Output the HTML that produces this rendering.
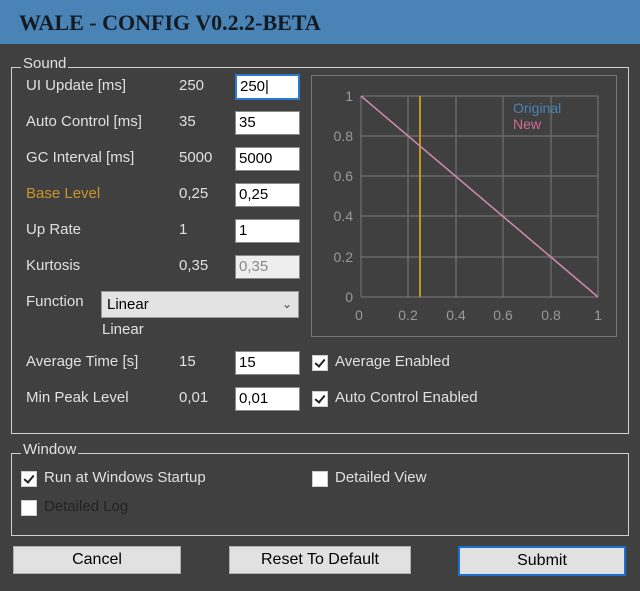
<!DOCTYPE html><html><head><style>
body{margin:0;width:640px;height:591px;background:#404040;font-family:"Liberation Sans",sans-serif;font-size:15px;color:#e0e0e0;position:relative;overflow:hidden}
.a{position:absolute;white-space:nowrap}
.title{left:0;top:0;width:640px;height:44px;background:#4a84b6}
.title span{position:absolute;left:19px;top:10px;font-family:"Liberation Serif",serif;font-weight:bold;font-size:22px;color:#141a22;letter-spacing:0px}
.grp{position:absolute;border:1px solid #d0d0d0}
.lg{position:absolute;background:#404040;padding:0 2px;font-size:15px;color:#e0e0e0}
.in{position:absolute;width:60px;height:22px;background:#fff;border:1px solid #888;color:#000;padding-left:3px;line-height:22px;box-sizing:content-box}
.cb{position:absolute;width:14px;height:14px;background:#fff;border:1px solid #ccc}
.cb.c::after{content:"";position:absolute;left:4px;top:1px;width:4px;height:8px;border:solid #222;border-width:0 2px 2px 0;transform:rotate(40deg)}
.btn{position:absolute;height:26px;background:#e1e1e1;border:1px solid #adadad;color:#000;text-align:center;line-height:26px;font-size:16px}
</style></head><body>
<div class="a title"><span>WALE - CONFIG V0.2.2-BETA</span></div>
<div class="grp" style="left:11px;top:67px;width:616px;height:365px"></div>
<div class="lg" style="left:21px;top:55px">Sound</div>
<div class="a" style="left:26px;top:77px">UI Update [ms]</div><div class="a" style="left:179px;top:77px">250</div><div class="in" style="left:235px;top:74px;border:2px solid #2a7ad0;width:58px;height:22px">250|</div>
<div class="a" style="left:26px;top:113px">Auto Control [ms]</div><div class="a" style="left:179px;top:113px">35</div><div class="in" style="left:235px;top:111px">35</div>
<div class="a" style="left:26px;top:149px">GC Interval [ms]</div><div class="a" style="left:179px;top:149px">5000</div><div class="in" style="left:235px;top:147px">5000</div>
<div class="a" style="left:26px;top:185px;color:#c89628">Base Level</div><div class="a" style="left:179px;top:185px">0,25</div><div class="in" style="left:235px;top:183px">0,25</div>
<div class="a" style="left:26px;top:221px">Up Rate</div><div class="a" style="left:179px;top:221px">1</div><div class="in" style="left:235px;top:219px">1</div>
<div class="a" style="left:26px;top:257px">Kurtosis</div><div class="a" style="left:179px;top:257px">0,35</div><div class="in" style="left:235px;top:255px;background:#eee;color:#888">0,35</div>
<div class="a" style="left:26px;top:293px">Function</div>
<div class="a" style="left:101px;top:291px;width:196px;height:25px;background:#e3e3e3;border:1px solid #999;color:#000;line-height:25px"><span style="padding-left:5px">Linear</span><span style="position:absolute;right:6px;top:0;font-size:12px;color:#444">&#8964;</span></div>
<div class="a" style="left:102px;top:321px">Linear</div>
<div class="a" style="left:26px;top:353px">Average Time [s]</div><div class="a" style="left:179px;top:353px">15</div><div class="in" style="left:235px;top:351px">15</div>
<div class="a" style="left:26px;top:389px">Min Peak Level</div><div class="a" style="left:179px;top:389px">0,01</div><div class="in" style="left:235px;top:387px">0,01</div>
<div class="cb c" style="left:312px;top:355px"></div><div class="a" style="left:335px;top:353px">Average Enabled</div>
<div class="cb c" style="left:312px;top:391px"></div><div class="a" style="left:335px;top:389px">Auto Control Enabled</div>
<svg class="a" style="left:311px;top:75px" width="307" height="263" font-family="Liberation Sans" font-size="14" fill="#999">
<rect x="0.5" y="0.5" width="305" height="261" fill="none" stroke="#777"/>
<g stroke="#7a7a7a"><line x1="50" y1="21" x2="50" y2="222"/><line x1="97" y1="21" x2="97" y2="222"/><line x1="145" y1="21" x2="145" y2="222"/><line x1="192" y1="21" x2="192" y2="222"/><line x1="240" y1="21" x2="240" y2="222"/><line x1="287" y1="21" x2="287" y2="222"/>
<line x1="50" y1="21" x2="287" y2="21"/><line x1="50" y1="61" x2="287" y2="61"/><line x1="50" y1="101" x2="287" y2="101"/><line x1="50" y1="141" x2="287" y2="141"/><line x1="50" y1="182" x2="287" y2="182"/><line x1="50" y1="222" x2="287" y2="222"/></g>
<line x1="109" y1="21" x2="109" y2="222" stroke="#c0961e" stroke-width="2"/>
<line x1="50" y1="21" x2="287" y2="222" stroke="#d08ab0" stroke-width="1.5"/>
<text x="202" y="38" fill="#4a84b6">Original</text><text x="202" y="54" fill="#d06c90">New</text>
<g text-anchor="end"><text x="42" y="26">1</text><text x="42" y="66">0.8</text><text x="42" y="106">0.6</text><text x="42" y="146">0.4</text><text x="42" y="187">0.2</text><text x="42" y="227">0</text></g>
<g text-anchor="middle"><text x="48" y="245">0</text><text x="97" y="245">0.2</text><text x="145" y="245">0.4</text><text x="192" y="245">0.6</text><text x="240" y="245">0.8</text><text x="287" y="245">1</text></g>
</svg>
<div class="grp" style="left:11px;top:453px;width:616px;height:81px"></div>
<div class="lg" style="left:21px;top:441px">Window</div>
<div class="cb c" style="left:21px;top:471px"></div><div class="a" style="left:44px;top:469px">Run at Windows Startup</div>
<div class="cb" style="left:312px;top:471px"></div><div class="a" style="left:335px;top:469px">Detailed View</div>
<div class="cb" style="left:21px;top:500px"></div><div class="a" style="left:44px;top:498px;color:#222">Detailed Log</div>
<div class="btn" style="left:13px;top:546px;width:166px">Cancel</div>
<div class="btn" style="left:229px;top:546px;width:180px">Reset To Default</div>
<div class="btn" style="left:458px;top:546px;width:164px;border:2px solid #1a70d0">Submit</div>
</body></html>
